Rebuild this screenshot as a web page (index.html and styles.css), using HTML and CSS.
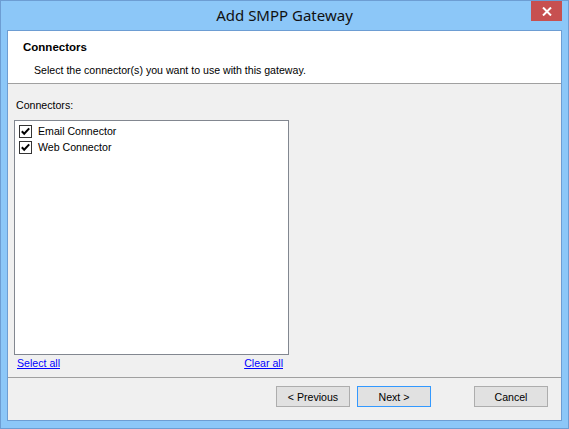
FILE: index.html
```html
<!DOCTYPE html>
<html lang="en">
<head>
  <meta charset="UTF-8" />
  <title>Add SMPP Gateway</title>
  <link rel="stylesheet" href="styles.css">
</head>
<body>
  <div class="window">
    <div class="titlebar">
      <span class="title">Add SMPP Gateway</span>
      <button class="close-btn" aria-label="Close">
        <svg width="10" height="9" viewBox="0 0 10 9"><path d="M1 0.5 L9 8.5 M9 0.5 L1 8.5" stroke="#fff" stroke-width="2" fill="none"/></svg>
      </button>
    </div>
    <div class="client">
      <div class="header">
        <div class="header-title">Connectors</div>
        <div class="header-desc">Select the connector(s) you want to use with this gateway.</div>
      </div>
      <div class="content">
        <div class="label">Connectors:</div>
        <div class="listbox">
          <label class="item">
            <span class="check"><svg width="13" height="13" viewBox="0 0 13 13"><rect x="0.5" y="0.5" width="12" height="12" fill="#fff" stroke="#333"/><path d="M2.8 6.3 L5.2 8.8 L10.2 3.4" stroke="#000" stroke-width="2" fill="none"/></svg></span>
            Email Connector
          </label>
          <label class="item">
            <span class="check"><svg width="13" height="13" viewBox="0 0 13 13"><rect x="0.5" y="0.5" width="12" height="12" fill="#fff" stroke="#333"/><path d="M2.8 6.3 L5.2 8.8 L10.2 3.4" stroke="#000" stroke-width="2" fill="none"/></svg></span>
            Web Connector
          </label>
        </div>
        <div class="links">
          <a href="#">Select all</a>
          <a href="#">Clear all</a>
        </div>
      </div>
      <div class="footer">
        <button class="btn">&lt; Previous</button>
        <button class="btn btn-default">Next &gt;</button>
        <button class="btn btn-cancel">Cancel</button>
      </div>
    </div>
  </div>
</body>
</html>
```

FILE: styles.css
```css
*{margin:0;padding:0;box-sizing:border-box;}
body {margin:0; font-family:'Liberation Sans', Arial, sans-serif; font-size:10.6px; color:#000; background:#fff;}

.window {
  width:569px; height:429px; background:#8cc7f8; border:1px solid #6d9dd3;
  display:flex; flex-direction:column; padding:0 6px 7px 6px;
}
.titlebar {
  height:29px; display:grid; grid-template-columns:1fr auto 1fr; align-items:start;
}
.title {
  grid-column:2; font-family:'Noto Sans', 'Open Sans', sans-serif; font-size:15px;
  line-height:28px; color:#111;
}
.close-btn {
  grid-column:3; justify-self:end; width:31px; height:20px; border:none;
  background:#c75050; display:flex; align-items:center; justify-content:center;
}

.client {
  flex:1; border:1px solid #6d9dd3; background:#f0f0f0;
  display:flex; flex-direction:column;
}
.header {
  height:53px; background:#fff; border-bottom:1px solid #a0a0a0; padding:9px 0 0 15px;
}
.header-title {font-weight:bold; font-size:11.5px; line-height:14px;}
.header-desc {margin-top:9px; padding-left:11px; line-height:14px;}

.content {flex:1; padding:14px 0 0 6px;}
.label {padding-left:2px; line-height:14px; margin-bottom:8px;}
.listbox {
  width:275px; height:235px; background:#fff; border:1px solid #828790; padding:2px 4px;
}
.item {display:flex; align-items:center; height:16px; gap:6px;}
.check {display:flex; width:13px; height:13px;}
.links {
  width:275px; display:flex; justify-content:space-between; padding:1px 6px 0 3px; line-height:14px;
}
.links a {color:#0000ff; text-decoration:underline;}

.footer {
  border-top:1px solid #a0a0a0; display:flex; justify-content:flex-end;
  padding:8px 13px 13px 0; gap:7px;
}
.btn {
  width:74px; height:21px; background:#e1e1e1; border:1px solid #adadad;
  font-family:'Liberation Sans', Arial, sans-serif; font-size:10.6px; color:#000;
}
.btn-default {border-color:#3399ff;}
.btn-cancel {margin-left:36px;}
```
